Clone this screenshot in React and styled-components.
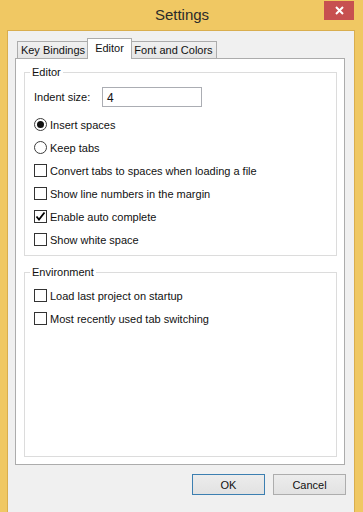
import React from 'react'
import styled, { createGlobalStyle } from 'styled-components'

const GlobalStyle = createGlobalStyle`
  html, body {
    margin: 0;
    padding: 0;
    background: #f0c863;
  }
  body {
    font-family: "Liberation Sans", Arial, sans-serif;
    font-size: 11px;
    color: #111;
  }
`

const Window = styled.div`
  width: 363px;
  height: 512px;
  box-sizing: border-box;
  padding: 0 8px 0 7px;
  background: #f0c863;
  display: flex;
  flex-direction: column;
`

const TitleBar = styled.div`
  height: 30px;
  flex: none;
  display: grid;
  grid-template-columns: 1fr auto 1fr;
  align-items: start;
`

const Title = styled.div`
  grid-column: 2;
  font-size: 15px;
  line-height: 30px;
  color: #2b2b2b;
  padding-left: 2px;
`

const CloseButton = styled.div`
  grid-column: 3;
  justify-self: end;
  width: 30px;
  height: 19px;
  margin-top: 1px;
  margin-right: 1px;
  background: #c75050;
  display: flex;
  align-items: center;
  justify-content: center;
`

const Client = styled.div`
  flex: 1;
  border: 1px solid #d9ae4e;
  border-bottom: none;
  background: #f0f0f0;
  padding: 7px 9px 0 7px;
  display: flex;
  flex-direction: column;
`

const TabStrip = styled.div`
  height: 20px;
  display: flex;
  align-items: flex-end;
  padding-left: 2px;
`

const Tab = styled.div`
  box-sizing: border-box;
  width: ${p => p.w}px;
  height: ${p => (p.active ? 21 : 17)}px;
  margin: ${p => (p.active ? '0 -2px -1px' : '0')};
  position: relative;
  z-index: ${p => (p.active ? 1 : 0)};
  border: 1px solid #acacac;
  border-bottom: none;
  background: ${p => (p.active ? '#fff' : 'linear-gradient(#f0f0f0, #e5e5e5)')};
  display: flex;
  align-items: center;
  justify-content: center;
  padding-bottom: ${p => (p.active ? 3 : 0)}px;
  white-space: nowrap;
`

const Panel = styled.div`
  height: 407px;
  box-sizing: border-box;
  border: 1px solid #acacac;
  background: #fff;
  padding: 6px 7px 7px 8px;
  display: flex;
  flex-direction: column;
  gap: 9px;
`

const Group = styled.fieldset`
  margin: 0;
  min-width: 0;
  border: 1px solid #dcdcdc;
  padding: ${p => p.top}px 9px 4px;
  flex: ${p => (p.grow ? 1 : 'none')};
  display: flex;
  flex-direction: column;
`

const Legend = styled.legend`
  margin-left: -4px;
  padding: 0 2px;
  line-height: 14px;
`

const FieldRow = styled.div`
  height: 20px;
  margin-top: 8px;
  margin-bottom: 6px;
  display: flex;
  align-items: center;
`

const FieldLabel = styled.span`
  width: 68px;
  flex: none;
`

const TextBox = styled.div`
  box-sizing: border-box;
  width: 100px;
  height: 20px;
  border: 1px solid #abadb3;
  padding: 0 4px;
  display: flex;
  align-items: center;
  padding-top: 1px;
  font-size: 12px;
`

const Option = styled.div`
  height: 23px;
  display: flex;
  align-items: center;
  gap: 3px;
  white-space: nowrap;
`

const RadioMark = styled.span`
  box-sizing: border-box;
  width: 13px;
  height: 13px;
  border-radius: 50%;
  border: 1px solid #3c3c3c;
  background: #fff;
  display: flex;
  align-items: center;
  justify-content: center;
  &::after {
    content: '';
    width: 7px;
    height: 7px;
    border-radius: 50%;
    background: ${p => (p.checked ? '#111' : 'transparent')};
  }
`

const BoxMark = styled.span`
  box-sizing: border-box;
  width: 13px;
  height: 13px;
  border: 1px solid #333;
  background: #fff;
  display: flex;
  align-items: center;
  justify-content: center;
`

const ButtonRow = styled.div`
  margin-top: 9px;
  display: flex;
  justify-content: flex-end;
  gap: 8px;
  margin-right: -1px;
`

const Button = styled.div`
  box-sizing: border-box;
  width: 73px;
  height: 21px;
  border: 1px solid ${p => (p.primary ? '#3c7fb1' : '#adadad')};
  background: linear-gradient(#ececec, #e2e2e2);
  display: flex;
  align-items: center;
  justify-content: center;
`

const Radio = ({ checked, children }) => (
  <Option>
    <RadioMark checked={checked} />
    {children}
  </Option>
)

const Check = ({ checked, children }) => (
  <Option>
    <BoxMark>
      {checked && (
        <svg width="11" height="11" viewBox="0 0 11 11">
          <path d="M1.5 5.5 L4 8.5 L9.5 1.5" fill="none" stroke="#000" strokeWidth="1.8" />
        </svg>
      )}
    </BoxMark>
    {children}
  </Option>
)

const App = () => {
  return (
    <Window>
      <GlobalStyle />
      <TitleBar>
        <Title>Settings</Title>
        <CloseButton>
          <svg width="9" height="9" viewBox="0 0 9 9">
            <path d="M1 1 L8 8 M8 1 L1 8" stroke="#fff" strokeWidth="2" />
          </svg>
        </CloseButton>
      </TitleBar>
      <Client>
        <TabStrip>
          <Tab w={72}>Key Bindings</Tab>
          <Tab w={45} active>Editor</Tab>
          <Tab w={87}>Font and Colors</Tab>
        </TabStrip>
        <Panel>
          <Group top={0}>
            <Legend>Editor</Legend>
            <FieldRow>
              <FieldLabel>Indent size:</FieldLabel>
              <TextBox>4</TextBox>
            </FieldRow>
            <Radio checked>Insert spaces</Radio>
            <Radio>Keep tabs</Radio>
            <Check>Convert tabs to spaces when loading a file</Check>
            <Check>Show line numbers in the margin</Check>
            <Check checked>Enable auto complete</Check>
            <Check>Show white space</Check>
          </Group>
          <Group top={5} grow>
            <Legend>Environment</Legend>
            <Check>Load last project on startup</Check>
            <Check>Most recently used tab switching</Check>
          </Group>
        </Panel>
        <ButtonRow>
          <Button primary>OK</Button>
          <Button>Cancel</Button>
        </ButtonRow>
      </Client>
    </Window>
  )
}

export default App
